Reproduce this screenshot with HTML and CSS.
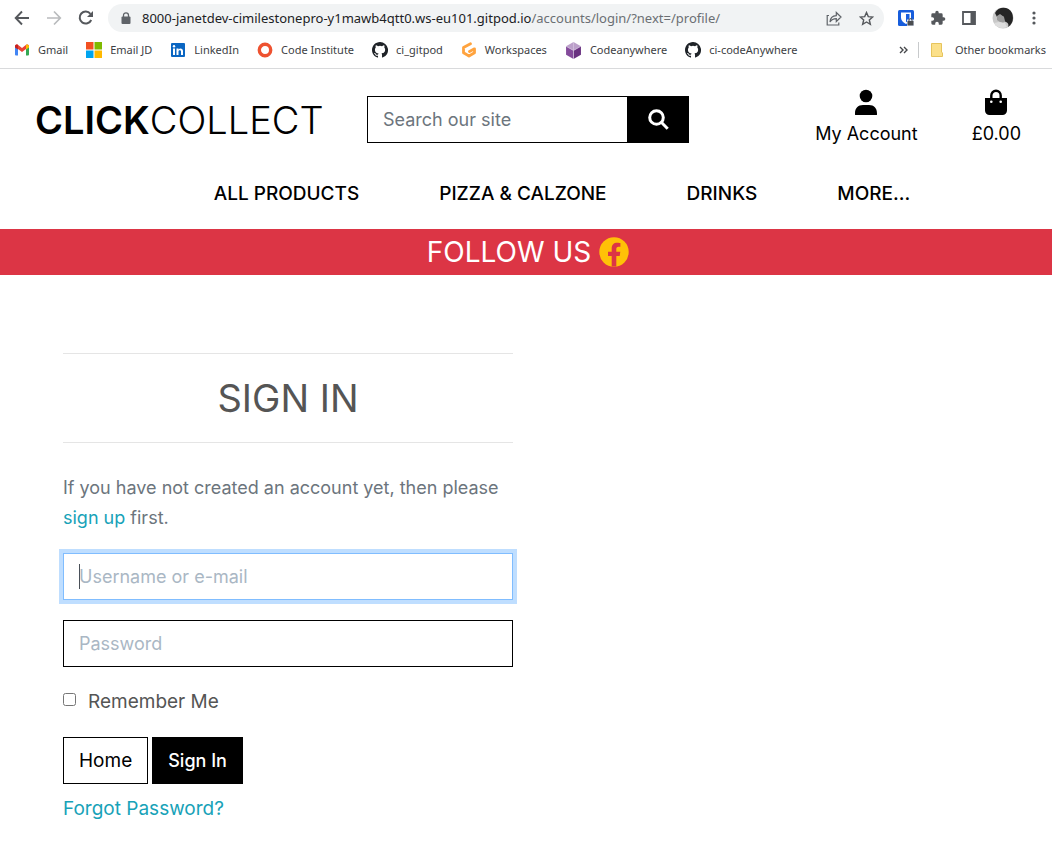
FILE: index.html
```html
<!DOCTYPE html>
<html lang="en">
<head>
<meta charset="utf-8">
<title>Click Collect - Sign In</title>
<link rel="stylesheet" href="styles.css">
</head>
<body>
<div class="browser">
  <div class="toolbar">
    <button class="tool back" aria-label="Back"><svg width="16" height="16" viewBox="0 0 16 16" fill="none" stroke="#55585c" stroke-width="1.9"><path d="M15 8H2M8 1.5 1.7 8 8 14.500"/></svg></button>
    <button class="tool forward" aria-label="Forward"><svg width="16" height="16" viewBox="0 0 16 16" fill="none" stroke="#b9bbbd" stroke-width="1.700"><path d="M1 8h13M8 1.500 14.300 8 8 14.500"/></svg></button>
    <button class="tool" aria-label="Reload"><svg width="16" height="16" viewBox="0 0 16 16"><path d="M13.200 10a6 6 0 1 1-.8-6.200" fill="none" stroke="#55585c" stroke-width="2"/><path d="M15 1v6H9z" fill="#55585c"/></svg></button>
    <div class="address">
      <svg width="10" height="13" viewBox="0 0 10 13"><rect x=".5" y="4.500" width="9" height="7.500" rx="1" fill="#5f6368"/><path d="M2.500 5V3.300a2.500 2.500 0 0 1 5 0V5" fill="none" stroke="#5f6368" stroke-width="1.300"/></svg>
      <span class="url">8000-janetdev-cimilestonepro-y1mawb4qtt0.ws-eu101.gitpod.io<span class="path">/accounts/login/?next=/profile/</span></span>
      <button class="tool share" aria-label="Share"><svg width="16" height="15" viewBox="0 0 16 15" fill="none" stroke="#5f6368" stroke-width="1.200"><path d="M3 4.500H1.200V14h11.600v-2.500M4 11c.2-4 2.500-6.200 6.300-6.400V1.500L15 6l-4.700 4.500V7.600C7.500 7.600 5.500 8.500 4 11z"/></svg></button>
      <button class="tool" aria-label="Bookmark"><svg width="15" height="15" viewBox="0 0 16 16" fill="none" stroke="#55585c" stroke-width="1.500"><path d="M8 1.600 9.900 6l4.700.4-3.600 3.100 1.100 4.700L8 11.700l-4.100 2.500L5 9.500 1.400 6.400 6.100 6z"/></svg></button>
    </div>
    <button class="tool" aria-label="Password manager"><svg width="16" height="16" viewBox="0 0 16 16"><rect width="16" height="16" rx="1.500" fill="#175ddc"/><path d="M3 2.500h10v5c0 3-2 5-5 6.500-3-1.500-5-3.500-5-6.500z" fill="#fff"/><path d="M8 4h3.500v3.500c0 2-1.200 3.500-3.500 4.700z" fill="#175ddc"/><path d="M9 9.500h7V16H9z" fill="#dce7f8"/><rect x="9.500" y="11" width="6" height="4.500" fill="#4b4d50"/><path d="M11 11v-1a1.500 1.500 0 0 1 3 0v1" fill="none" stroke="#4b4d50"/></svg></button>
    <button class="tool" aria-label="Extensions"><svg width="16" height="16" viewBox="0 0 24 24" fill="#55585c"><path d="M20.500 11H19V7a2 2 0 0 0-2-2h-4V3.500a2.500 2.500 0 0 0-5 0V5H4a2 2 0 0 0-2 2v3.800h1.500a2.700 2.700 0 0 1 0 5.400H2V20a2 2 0 0 0 2 2h3.800v-1.500a2.700 2.700 0 0 1 5.400 0V22H17a2 2 0 0 0 2-2v-4h1.500a2.500 2.500 0 0 0 0-5z"/></svg></button>
    <button class="tool" aria-label="Side panel"><svg width="14" height="14" viewBox="0 0 14 14"><path d="M1 1h12v12H1z" fill="none" stroke="#55585c" stroke-width="1.800"/><path d="M8.500 1H13v12H8.500z" fill="#55585c"/></svg></button>
    <button class="tool" aria-label="Profile"><svg width="22" height="22" viewBox="0 0 22 22"><circle cx="11" cy="11" r="10.500" fill="#c9c9c9"/><path d="M3 6C6-1 17-1 20 6c2 5 1 11-4 14 1-3 0-4-2-5l-2-1 0-4-4-2-3 2z" fill="#252525"/><path d="M5 9 8 7l4 3 1 4-2 2-3-1-3-2z" fill="#9b9b9b"/><path d="M2 16l5-1 6 1 2 4c-5 2-10 1-13-4z" fill="#dedede"/></svg></button>
    <button class="tool overflow" aria-label="Menu"><svg width="4" height="16" viewBox="0 0 4 16" fill="#55585c"><circle cx="2" cy="3" r="1.600"/><circle cx="2" cy="8" r="1.600"/><circle cx="2" cy="13" r="1.600"/></svg></button>
  </div>
  <nav class="bookmarks" aria-label="Bookmarks">
    <a href="#"><svg width="16" height="16" viewBox="0 0 16 16"><path d="M1 3v9.500q0 1 1 1h2V6z" fill="#4285f4"/><path d="M15 3v9.500q0 1-1 1h-2V6z" fill="#34a853"/><path d="M1 4.500C1 2.500 3 2 4.200 3L8 6l3.800-3C13 2 15 2.500 15 4.500L12 7 8 10 4 7z" fill="#ea4335"/><path d="M12 3c1.500-1 3-.3 3 1.500v1L12 7.500z" fill="#fbbc04"/><path d="M1 4.500v1l3 2V3C2.500 2 1 2.700 1 4.500z" fill="#c5221f"/></svg>Gmail</a>
    <a href="#"><svg width="16" height="16" viewBox="0 0 16 16"><path d="M0 0h7.500v7.500H0z" fill="#f25022"/><path d="M8.500 0H16v7.500H8.500z" fill="#7fba00"/><path d="M0 8.500h7.500V16H0z" fill="#00a4ef"/><path d="M8.500 8.500H16V16H8.500z" fill="#ffb900"/></svg>Email JD</a>
    <a href="#"><svg width="16" height="16" viewBox="0 0 16 16"><rect x="1" y="1" width="14" height="14" rx="1" fill="#0a66c2"/><path d="M3 6.500h2V13H3zM6.500 6.500h2v1c1.200-1.800 4.500-1.500 4.500 1.500v4h-2V9.500c0-1.800-2.500-1.800-2.500 0V13h-2z" fill="#fff"/><circle cx="4" cy="4.300" r="1.200" fill="#fff"/></svg>LinkedIn</a>
    <a href="#"><svg width="16" height="16" viewBox="0 0 16 16"><circle cx="8" cy="8" r="5.700" fill="none" stroke="#ee5230" stroke-width="3.400"/></svg>Code Institute</a>
    <a href="#"><svg width="16" height="16" viewBox="0 0 16 16"><path fill="#1f2328" d="M8 0C3.580 0 0 3.580 0 8c0 3.540 2.290 6.530 5.470 7.590.4.070.55-.17.55-.38v-1.490c-2.010.37-2.530-.49-2.690-.94-.09-.23-.48-.94-.82-1.130-.28-.15-.68-.52-.01-.53.630-.01 1.080.58 1.230.82.72 1.210 1.870.87 2.330.66.070-.52.28-.87.51-1.070-1.780-.2-3.640-.89-3.640-3.950 0-.87.310-1.590.82-2.150-.08-.2-.36-1.020.08-2.120 0 0 .67-.21 2.200.82a7.500 7.500 0 0 1 4 0c1.530-1.040 2.200-.82 2.200-.82.44 1.100.16 1.920.08 2.120.51.560.82 1.270.82 2.150 0 3.070-1.870 3.750-3.650 3.950.29.25.54.73.54 1.480v2.200c0 .21.15.46.55.38A8 8 0 0 0 8 0z"/></svg>ci_gitpod</a>
    <a href="#"><svg width="16" height="16" viewBox="0 0 16 16" fill="none" stroke="#ffa33e" stroke-width="2.800" stroke-linejoin="round" stroke-linecap="round"><path d="M9.500 1.800 2.500 5.500v5.300L8 14l5.500-3.200V6.800L8.500 9.500"/></svg>Workspaces</a>
    <a href="#"><svg width="17" height="17" viewBox="0 0 16 16"><path d="M8 0 15 4 8 8 1 4z" fill="#bca0ca"/><path d="M1 4l7 4v8l-7-4z" fill="#844b9b"/><path d="M15 4 8 8v8l7-4z" fill="#693180"/><path d="M8 0v8M1 4l7 4 7-4M8 8v8" stroke="#dacbe2" stroke-width=".6" fill="none"/></svg>Codeanywhere</a>
    <a href="#"><svg width="16" height="16" viewBox="0 0 16 16"><path fill="#1f2328" d="M8 0C3.580 0 0 3.580 0 8c0 3.540 2.290 6.530 5.470 7.590.4.070.55-.17.55-.38v-1.490c-2.010.37-2.530-.49-2.690-.94-.09-.23-.48-.94-.82-1.130-.28-.15-.68-.52-.01-.53.630-.01 1.080.58 1.230.82.72 1.210 1.870.87 2.330.66.070-.52.28-.87.51-1.070-1.780-.2-3.640-.89-3.640-3.950 0-.87.310-1.590.82-2.150-.08-.2-.36-1.020.08-2.120 0 0 .67-.21 2.200.82a7.500 7.500 0 0 1 4 0c1.530-1.040 2.200-.82 2.200-.82.44 1.100.16 1.920.08 2.120.51.560.82 1.270.82 2.150 0 3.070-1.870 3.750-3.650 3.950.29.25.54.73.54 1.480v2.200c0 .21.15.46.55.38A8 8 0 0 0 8 0z"/></svg>ci-codeAnywhere</a>
    <button class="tool more" aria-label="More bookmarks"><svg width="9" height="8" viewBox="0 0 9 8" fill="none" stroke="#45474a" stroke-width="1.400"><path d="M1 1l3 3-3 3M5 1l3 3-3 3"/></svg></button>
    <a href="#" class="other"><svg width="12" height="14" viewBox="0 0 12 14"><path d="M.5.5h10V9l1 1v3.500H.5z" fill="#fbe08a" stroke="#e6c45c"/></svg>Other bookmarks</a>
  </nav>
</div>

<header class="header">
  <div class="masthead">
    <a class="logo" href="#"><strong>CLICK</strong>COLLECT</a>
    <form class="search">
      <input type="text" placeholder="Search our site" aria-label="Search our site">
      <button type="button" aria-label="Search"><svg width="21" height="21" viewBox="0 0 21 21" fill="none" stroke="#fff" stroke-width="3"><circle cx="8.500" cy="8.500" r="6.800"/><path d="M13.300 13.300 19.700 19.700"/></svg></button>
    </form>
    <div class="account">
      <a href="#"><svg width="24" height="26" viewBox="0 0 24 26"><circle cx="12" cy="7" r="6.300"/><path d="M1 25.500v-1C1 19 4 16 9 16h6c5 0 8 3 8 8.500v1q0 .5-.8.5H1.800q-.8 0-.8-.5z"/></svg>My Account</a>
      <a href="#"><svg width="24" height="26" viewBox="0 0 24 26"><path d="M1 9h22v12.500a4.500 4.500 0 0 1-4.500 4.500h-13A4.500 4.500 0 0 1 1 21.500z"/><path d="M7.300 12V6.500a4.700 4.700 0 0 1 9.400 0V12" fill="none" stroke="#000" stroke-width="2.400"/><circle cx="7.300" cy="12.700" r="1.300" fill="#fff"/><circle cx="16.700" cy="12.700" r="1.300" fill="#fff"/></svg>£0.00</a>
    </div>
  </div>
  <nav class="menu" aria-label="Main">
    <a href="#">ALL PRODUCTS</a>
    <a href="#">PIZZA &amp; CALZONE</a>
    <a href="#">DRINKS</a>
    <a href="#">MORE...</a>
  </nav>
</header>

<div class="banner">FOLLOW US <a href="#" aria-label="Facebook"><svg width="30" height="30" viewBox="0 0 30 30"><circle cx="15" cy="15" r="14.700" fill="#ffc107"/><path d="M12.700 29.500V19H9v-4.300h3.700v-3.200c0-3.700 2.200-5.700 5.500-5.700 1.600 0 3.200.3 3.200.3v3.600h-1.800c-1.800 0-2.300 1.100-2.300 2.200v2.800h4l-.6 4.300h-3.400v10.500z" fill="#dc3545"/></svg></a></div>

<main class="content">
  <section class="signin">
    <h1>SIGN IN</h1>
    <p>If you have not created an account yet, then please <a href="#">sign up</a> first.</p>
    <form class="login">
      <input class="field active" type="text" placeholder="Username or e-mail" aria-label="Username or e-mail">
      <input class="field" type="password" placeholder="Password" aria-label="Password">
      <div class="remember"><input type="checkbox" id="remember"><label for="remember">Remember Me</label></div>
      <div class="actions"><a class="btn" href="#">Home</a><button class="btn dark" type="button">Sign In</button></div>
      <a class="forgot" href="#">Forgot Password?</a>
    </form>
  </section>
</main>
</body>
</html>
```
FILE: styles.css
```css
* { box-sizing: border-box; }
body {
  margin: 0;
  background: #fff;
  color: #555;
  font: 18px/30px Inter, "Liberation Sans", sans-serif;
}
a { color: inherit; text-decoration: none; }
button, input { font: inherit; }
svg { flex: none; }

.browser {
  font: 11px/16px "Noto Sans", "Open Sans", sans-serif;
  color: #3c4043;
  border-bottom: 1px solid #d9dadc;
}
.toolbar {
  display: flex;
  align-items: center;
  gap: 16px;
  height: 36px;
  padding: 4px 16px 4px 14px;
}
.tool {
  display: flex;
  padding: 0;
  border: 0;
  background: none;
}
.overflow { margin-left: 2px; }
.address {
  flex: 1;
  display: flex;
  align-items: center;
  height: 28px;
  margin: 0 -2px;
  padding: 0 10px 0 13px;
  border-radius: 14px;
  background: #f1f3f4;
}
.url {
  flex: 1;
  margin-left: 11px;
  font-size: 13px;
  color: #202124;
}
.path { color: #6b6f73; }
.share { margin-right: 17px; }
.bookmarks {
  display: flex;
  align-items: center;
  gap: 18px;
  height: 32px;
  padding: 0 6px 4px 14px;
  white-space: nowrap;
}
.bookmarks a {
  display: flex;
  align-items: center;
  gap: 8px;
}
.bookmarks .more { margin-left: auto; }
.bookmarks .other {
  margin-left: -8px;
  padding-left: 12px;
  border-left: 1px solid #c8cacc;
  gap: 12px;
}

.header { color: #000; }
.masthead {
  display: flex;
  align-items: center;
  height: 101px;
  padding: 0 31px 0 35px;
}
.logo {
  width: 332px;
  font-size: 38px;
  font-weight: 300;
}
.logo strong { font-weight: 600; }
.search { display: flex; width: 322px; }
.search input {
  flex: 1;
  min-width: 0;
  height: 47px;
  padding: 0 15px;
  border: 1px solid #000;
  border-radius: 0;
}
.search input::placeholder { color: #6c757d; opacity: 1; }
.search button {
  display: flex;
  align-items: center;
  justify-content: center;
  width: 61px;
  padding: 0;
  border: 0;
  background: #000;
}
.account {
  display: flex;
  gap: 54px;
  margin-left: auto;
  padding-bottom: 2px;
}
.account a {
  display: flex;
  flex-direction: column;
  align-items: center;
  gap: 4px;
}
.menu {
  display: flex;
  justify-content: center;
  gap: 80px;
  padding: 9px 0 20px 72px;
  font-size: 19px;
  font-weight: 500;
}
.banner {
  display: flex;
  align-items: center;
  justify-content: center;
  gap: 8px;
  height: 46px;
  padding-left: 4px;
  background: #dc3545;
  color: #fff;
  font-size: 28px;
}
.banner a { display: flex; }

.content { padding: 78px 63px 24px; }
.signin { max-width: 450px; }
.signin h1 {
  margin: 0 0 30px;
  padding: 20px 0;
  border: solid #e5e5e5;
  border-width: 1px 0;
  font-size: 38px;
  font-weight: 400;
  line-height: 48px;
  text-align: center;
}
.signin p { margin: 0 0 20px; color: #6c757d; }
.signin p a, .forgot { color: #17a2b8; }
.login { display: flex; flex-direction: column; }
.field {
  height: 47px;
  margin-bottom: 20px;
  padding: 0 15px;
  border: 1px solid #000;
  border-radius: 0;
  outline: 0;
  color: #495057;
}
.field::placeholder { color: #aab7c4; opacity: 1; }
.active {
  border-color: #80bdff;
  box-shadow: 0 0 0 4px #bfdeff;
  background: linear-gradient(#495057, #495057) 15px center / 1px 25px no-repeat;
}
.remember {
  display: flex;
  align-items: center;
  gap: 12px;
  margin-bottom: 20px;
  font-size: 19px;
}
.remember input { width: 13px; height: 13px; margin: 0 0 5px; }
.actions { display: flex; gap: 4px; margin-bottom: 10px; }
.btn {
  padding: 8px 15px;
  border: 1px solid #000;
  font-size: 19px;
  line-height: 29px;
  color: #000;
}
.dark { background: #000; color: #fff; font-size: 18px; font-weight: 500; }
.forgot { align-self: flex-start; font-size: 19px; }
```
